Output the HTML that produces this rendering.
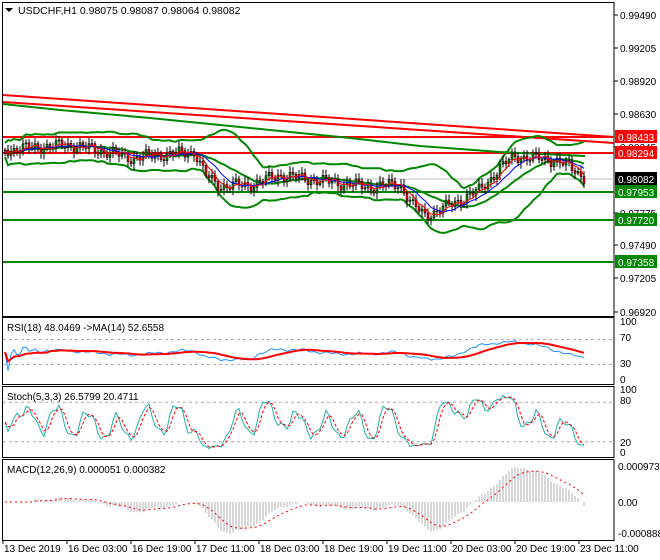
<!DOCTYPE html><html><head><meta charset="utf-8"><style>
html,body{margin:0;padding:0;background:#fff;width:660px;height:560px;overflow:hidden}
svg{display:block;font-family:"Liberation Sans",sans-serif}
</style></head><body>
<svg id="s" width="660" height="560" xmlns="http://www.w3.org/2000/svg">
<rect width="660" height="560" fill="#fff"/>
<g id="g"></g>
<g font-size="10" fill="#000">
<text x="18" y="14" font-size="10.5">USDCHF,H1  0.98075 0.98087 0.98064 0.98082</text>
<path d="M5 8h8l-4 4z" fill="#000"/>
<text x="7" y="331">RSI(18) 48.0469  -&gt;MA(14) 52.6558</text>
<text x="7" y="400">Stoch(5,3,3) 26.5799 20.4711</text>
<text x="7" y="473">MACD(12,26,9) 0.000051 0.000382</text>
</g>
</svg>
<script>
var g=document.getElementById('g'),NS='http://www.w3.org/2000/svg';
function el(t,a){var e=document.createElementNS(NS,t);for(var k in a)e.setAttribute(k,a[k]);g.appendChild(e);return e}
function txt(x,y,s,o){var e=el('text',Object.assign({x:x,y:y,'font-size':10,fill:'#000'},o||{}));e.textContent=s;return e}
var L=2,R=614;
[[2,316],[317,384],[386,457],[459,540]].forEach(function(p){el('rect',{x:2.5,y:p[0]+.5,width:R-2.5,height:p[1]-p[0],fill:'none',stroke:'#000'})});
[['0.99490',15],['0.99205',48],['0.98920',81],['0.98630',114],['0.97490',245],['0.97205',278],['0.96920',312],['0.98345',147],['0.97775',213]].forEach(function(a){el('line',{x1:R,x2:R+4,y1:a[1],y2:a[1],stroke:'#000'});txt(R+6,a[1]+4,a[0])});
el('line',{x1:3,x2:R,y1:179,y2:179,stroke:'#c0c0c0'});
[[137,'#f00'],[153,'#f00'],[192,'#080'],[220,'#080'],[262,'#080']].forEach(function(a){el('line',{x1:3,x2:R,y1:a[0],y2:a[0],stroke:a[1],'stroke-width':2})});
el('line',{x1:3,y1:95,x2:R,y2:137,stroke:'#f00','stroke-width':2});
el('line',{x1:3,y1:102,x2:R,y2:143,stroke:'#f00','stroke-width':2});
el('polyline',{points:'3,104 60,110 150,118 250,128 350,138 420,146 500,152 585,156',fill:'none',stroke:'#080','stroke-width':2});
var K=[[5,150],[40,147],[70,145],[100,150],[130,158],[160,155],[195,152],[205,175],[220,186],[250,185],[280,175],[300,178],[330,182],[370,187],[400,184],[412,205],[425,215],[440,210],[460,200],[480,190],[500,168],[515,156],[530,158],[555,160],[575,170],[585,178]];
function interp(x){for(var i=1;i<K.length;i++)if(x<=K[i][0]){var a=K[i-1],b=K[i];return a[1]+(b[1]-a[1])*(x-a[0])/(b[0]-a[0])}return K[K.length-1][1]}
var N=194,xs=[],cl=[],op=[];
for(var i=0;i<N;i++){var x=5+i*3;xs.push(x);var v=interp(x)+4*Math.sin(i*1.7)+3*Math.sin(i*0.63);cl.push(v)}
for(i=0;i<N;i++){op.push(i?cl[i-1]:cl[0])}
function sma(a,n,i){var s=0,c=0;for(var j=Math.max(0,i-n+1);j<=i;j++){s+=a[j];c++}return s/c}
var up=[],lo=[],m20=[],ma5=[],ma10=[];
for(i=0;i<N;i++){var m=sma(cl,20,i),sd=0,c=0;for(var j=Math.max(0,i-19);j<=i;j++){sd+=(cl[j]-m)*(cl[j]-m);c++}sd=Math.sqrt(sd/c);m20.push(m);up.push(m-2*sd-7);lo.push(m+2*sd+7);ma5.push(sma(cl,5,i));ma10.push(sma(cl,10,i))}
function pl(arr,col,w,ys,dash){var p=[];for(var i=0;i<arr.length;i++)p.push(xs[i]+','+arr[i].toFixed(1));var o={points:p.join(' '),fill:'none',stroke:col,'stroke-width':w};if(dash)o['stroke-dasharray']=dash;el('polyline',o)}
pl(up,'#080',2);pl(lo,'#080',2);pl(m20,'#080',2);
for(i=0;i<N;i++){var o=op[i],c2=cl[i],hi=Math.min(o,c2)-2-Math.abs(Math.sin(i*2.3))*4,lw=Math.max(o,c2)+2+Math.abs(Math.cos(i*1.9))*4;
el('line',{x1:xs[i],x2:xs[i],y1:hi,y2:lw,stroke:'#000'});
el('rect',{x:xs[i]-1,y:Math.min(o,c2),width:2,height:Math.max(1,Math.abs(o-c2)),fill:c2<o?'#080':'#e00',stroke:'#000','stroke-width':.5})}
pl(ma10,'#00f',1);pl(ma5,'#f00',1);
function lab(y,s,bg){el('rect',{x:R+1,y:y-7,width:42,height:13,fill:bg});txt(R+4,y+4,s,{fill:'#fff'})}
lab(137,'0.98433','#f00');lab(153,'0.98294','#f00');lab(179,'0.98082','#000');lab(192,'0.97953','#080');lab(220,'0.97720','#080');lab(262,'0.97358','#080');
var ry=function(v){return 383-(v/100)*62};
el('line',{x1:3,x2:R,y1:ry(70),y2:ry(70),stroke:'#aaa','stroke-dasharray':'3,3'});
el('line',{x1:3,x2:R,y1:ry(30),y2:ry(30),stroke:'#aaa','stroke-dasharray':'3,3'});
var rsi=[],rsm=[];
for(i=0;i<N;i++){var gu=0,gd=0;for(j=Math.max(1,i-17);j<=i;j++){var d=cl[j-1]-cl[j];if(d>0)gu+=d;else gd-=d}var r=gu+gd?100*gu/(gu+gd):50;rsi.push(50+(r-50)*0.6)}
for(i=0;i<N;i++)rsm.push(sma(rsi,14,i));
pl(rsi.map(ry),'#1e90ff',1);pl(rsm.map(ry),'#f00',2);
[['100',325],['70',341],['30',367],['0',383]].forEach(function(a){txt(R+6,a[1],a[0])});
var sy=function(v){return 455-(v/100)*66};
el('line',{x1:3,x2:R,y1:sy(80),y2:sy(80),stroke:'#aaa','stroke-dasharray':'3,3'});
el('line',{x1:3,x2:R,y1:sy(20),y2:sy(20),stroke:'#aaa','stroke-dasharray':'3,3'});
var k=[],ks=[],dd=[];
for(i=0;i<N;i++){var h=1e9,l=-1e9;for(j=Math.max(0,i-4);j<=i;j++){h=Math.min(h,cl[j]-2);l=Math.max(l,cl[j]+2)}k.push(100*(l-cl[i])/(l-h||1))}
for(i=0;i<N;i++)ks.push(sma(k,3,i));for(i=0;i<N;i++)dd.push(sma(ks,3,i));
pl(ks.map(sy),'#20b2aa',1);pl(dd.map(sy),'#f00',1,0,'3,2');
[['100',393],['80',404],['20',446],['0',456]].forEach(function(a){txt(R+6,a[1],a[0])});
function ema(a,n){var r=[a[0]],al=2/(n+1);for(var i=1;i<a.length;i++)r.push(r[i-1]+al*(a[i]-r[i-1]));return r}
var e12=ema(cl,12),e26=ema(cl,26),mc=[],sg;
for(i=0;i<N;i++)mc.push(i<10?0:e26[i]-e12[i]);sg=ema(mc,9);
var mx=0;for(i=0;i<N;i++)mx=Math.max(mx,mc[i]);var mn=0;for(i=0;i<N;i++)mn=Math.min(mn,mc[i]);
var my=function(v){return v>0?502-v/mx*35:502+v/mn*32};
for(i=0;i<N;i++)el('line',{x1:xs[i],x2:xs[i],y1:502,y2:my(mc[i]),stroke:'#b0b0b0'});
pl(sg.map(my),'#f00',1,0,'2,3');
[['0.000973',470],['0.00',506],['-0.000888',537]].forEach(function(a){txt(R+4,a[1],a[0])});
[['13 Dec 2019',3],['16 Dec 03:00',67],['16 Dec 19:00',131],['17 Dec 11:00',195],['18 Dec 03:00',259],['18 Dec 19:00',323],['19 Dec 11:00',387],['20 Dec 03:00',451],['20 Dec 19:00',515],['23 Dec 11:00',579]].forEach(function(a){el('line',{x1:a[1],x2:a[1],y1:540,y2:544,stroke:'#000'});txt(a[1]+1,552,a[0])});
</script>
</body></html>
